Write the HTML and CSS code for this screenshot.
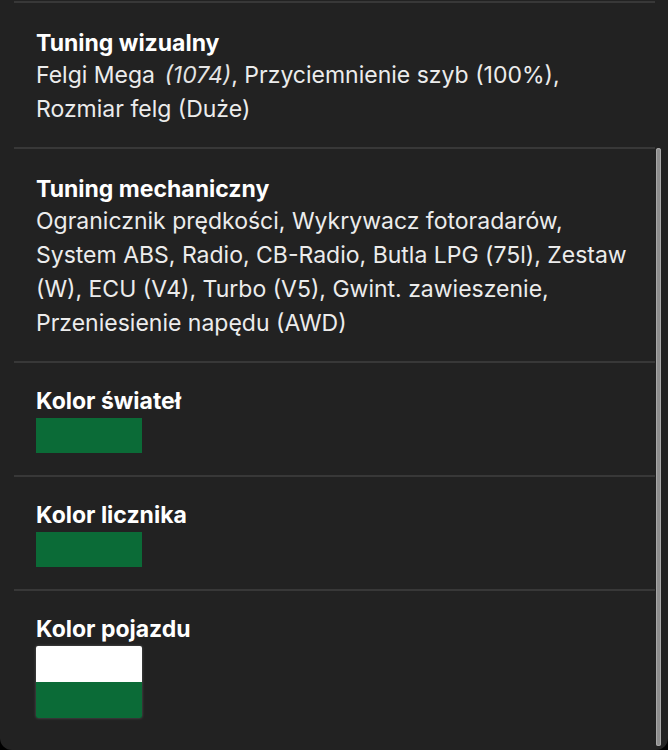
FILE: index.html
```html
<!DOCTYPE html>
<html lang="pl">
<head>
  <meta charset="UTF-8" />
  <meta name="viewport" content="width=device-width, initial-scale=1.0"/>
  <title>Szczegóły pojazdu</title>
  <link rel="stylesheet" href="styles.css">
</head>
<body>
  <div id="panel">
    <div id="details">
      <div class="row">
        <div class="label">Tuning wizualny</div>
        <div class="value">Felgi Mega <em>(1074)</em>, Przyciemnienie szyb (100%), Rozmiar felg (Duże)</div>
      </div>
      <div class="row">
        <div class="label">Tuning mechaniczny</div>
        <div class="value">Ogranicznik prędkości, Wykrywacz fotoradarów, System ABS, Radio, CB-Radio, Butla LPG (75l), Zestaw (W), ECU (V4), Turbo (V5), Gwint. zawieszenie, Przeniesienie napędu (AWD)</div>
      </div>
      <div class="row color">
        <div class="label">Kolor świateł</div>
        <div class="swatch" style="background:#0b6b37"></div>
      </div>
      <div class="row color">
        <div class="label">Kolor licznika</div>
        <div class="swatch" style="background:#0b6b37"></div>
      </div>
      <div class="row color">
        <div class="label">Kolor pojazdu</div>
        <div class="swatch double">
          <div style="background:#ffffff"></div>
          <div style="background:#0b6b37"></div>
        </div>
      </div>
    </div>
    <div id="scroll-thumb"></div>
  </div>
</body>
</html>
```

FILE: styles.css
```css
body {
  margin: 0;
  padding: 0;
  background: #000;
  font-family: Inter, "Noto Sans", sans-serif;
}
#panel {
  position: relative;
  height: 750px;
  padding-top: 1px;
  box-sizing: border-box;
  background: #222222;
  border-radius: 0 0 12px 12px;
  overflow: hidden;
}
#details {
  margin-left: 14px;
  width: 641px;
  border-top: 2px solid #383838;
}
.row {
  padding: 25px 22px 21px;
  border-bottom: 2px solid #383838;
}
.row.color {
  padding-top: 23px;
  padding-bottom: 22px;
}
.row:last-child {
  border-bottom: none;
}
.label {
  font-size: 23px;
  line-height: 30px;
  font-weight: 700;
  color: #fff;
}
.value {
  font-size: 23px;
  line-height: 34px;
  color: #ececec;
}
.value em {
  font-style: italic;
  color: #e4e4e4;
  margin-left: 3px;
}
.swatch {
  width: 106px;
  height: 35px;
  margin-top: 2px;
}
.swatch.double {
  height: auto;
  border-radius: 2px;
  overflow: hidden;
  box-shadow: 0 0 3px rgba(255, 255, 255, 0.25);
}
.swatch.double div {
  height: 36px;
}
#scroll-thumb {
  position: absolute;
  left: 656px;
  top: 148px;
  width: 5px;
  height: 598px;
  border-radius: 3px;
  background: #8e8e8e;
  box-shadow: inset 0 0 0 1px #a8a8a8;
}
```
